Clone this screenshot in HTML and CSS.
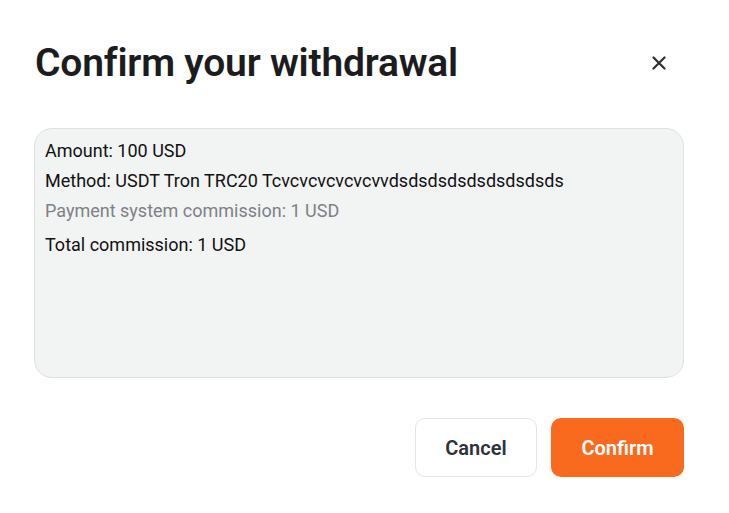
FILE: index.html
```html
<!DOCTYPE html>
<html>
<head>
<meta charset="utf-8">
<link rel="stylesheet" href="styles.css">
</head>
<body>
<div class="modal">
  <div class="header">
    <h1 class="title">Confirm your withdrawal</h1>
    <button class="close" aria-label="Close">
      <svg width="14" height="14" viewBox="0 0 14 14"><path d="M1.5 1.5L12.5 12.5M12.5 1.5L1.5 12.5" stroke="#2a2f36" stroke-width="2.2" stroke-linecap="round"/></svg>
    </button>
  </div>
  <div class="details">
    <div class="row">Amount: 100 USD</div>
    <div class="row">Method: USDT Tron TRC20 Tcvcvcvcvcvcvvdsdsdsdsdsdsdsdsds</div>
    <div class="row muted">Payment system commission: 1 USD</div>
    <div class="row total">Total commission: 1 USD</div>
  </div>
  <div class="actions">
    <button class="btn cancel">Cancel</button>
    <button class="btn confirm">Confirm</button>
  </div>
</div>
</body>
</html>
```
FILE: styles.css
```css
html, body {
  margin: 0;
  padding: 0;
  background: #ffffff;
}
body {
  font-family: Roboto, "Liberation Sans", sans-serif;
  color: #111111;
}
.modal {
  width: 650px;
  padding: 35px 45px 0 34px;
}
.header {
  display: flex;
  align-items: center;
  justify-content: space-between;
  height: 56px;
}
.title {
  margin: 0 0 0 1px;
  font-size: 39px;
  font-weight: 600;
  line-height: 56px;
  color: #1c1c1e;
  letter-spacing: -0.2px;
}
.close {
  border: 0;
  background: none;
  padding: 0;
  width: 14px;
  height: 14px;
  margin-right: 18px;
  display: flex;
  cursor: pointer;
}
.details {
  margin-top: 37px;
  height: 250px;
  box-sizing: border-box;
  border: 1px solid #dfe1e1;
  border-radius: 18px;
  background: #f2f4f4;
  padding: 7px 10px;
  font-size: 18px;
}
.row {
  line-height: 30px;
}
.muted {
  color: #7d8186;
}
.total {
  margin-top: 4px;
}
.actions {
  display: flex;
  justify-content: flex-end;
  gap: 14px;
  margin-top: 40px;
}
.btn {
  height: 59px;
  border-radius: 10px;
  font-family: Roboto, "Liberation Sans", sans-serif;
  font-size: 20px;
  font-weight: 600;
  cursor: pointer;
}
.cancel {
  width: 122px;
  background: #ffffff;
  border: 1px solid #e4e5e7;
  color: #2b323c;
}
.confirm {
  width: 133px;
  background: #f96a1f;
  border: 0;
  color: #ffffff;
}
```
